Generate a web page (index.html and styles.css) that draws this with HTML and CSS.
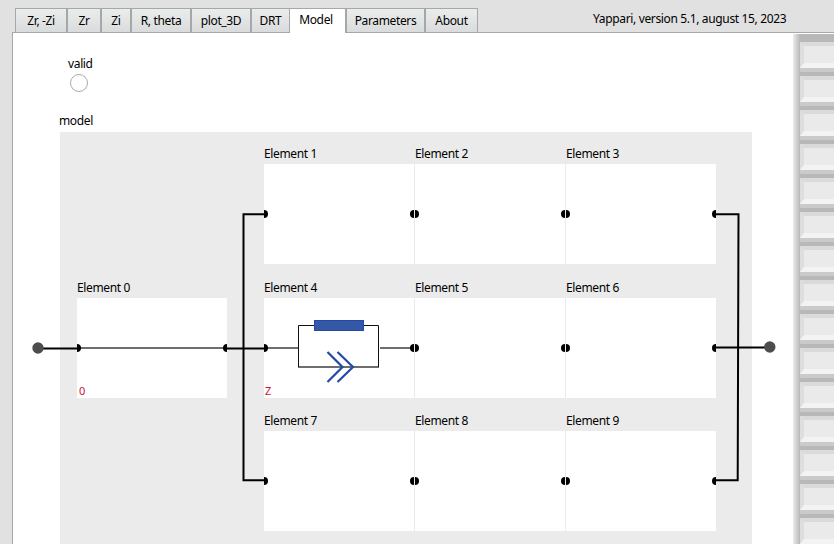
FILE: index.html
```html
<!DOCTYPE html>
<html lang="en">
<head>
<meta charset="utf-8">
<title>Yappari</title>
<link rel="stylesheet" href="styles.css">
</head>
<body>
<header class="bar">
  <nav class="tabs">
    <span class="tab w1">Zr, -Zi</span><span class="tab w2">Zr</span><span class="tab w3">Zi</span><span class="tab w4">R, theta</span><span class="tab w5">plot_3D</span><span class="tab w6">DRT</span><span class="tab active">Model</span><span class="tab w8">Parameters</span><span class="tab w9">About</span>
  </nav>
  <div class="version">Yappari, version 5.1, august 15, 2023</div>
</header>
<main class="page">
  <section class="content">
    <div class="valid"><span class="valid-label">valid</span><i class="led"></i></div>
    <div class="model-label">model</div>
    <div class="model">
      <figure class="el e0"><figcaption class="e0-label">Element 0</figcaption><div class="cell in out"><svg class="art" viewBox="0 0 150 100"><path class="wire" d="M3 50H147"/></svg><b class="code zero">0</b></div></figure>
      <div class="grid">
        <figure class="el"><figcaption class="e1-label">Element 1</figcaption><div class="cell in out"></div></figure>
        <figure class="el"><figcaption>Element 2</figcaption><div class="cell in out"></div></figure>
        <figure class="el"><figcaption>Element 3</figcaption><div class="cell in out"></div></figure>
        <figure class="el"><figcaption>Element 4</figcaption><div class="cell in out"><svg class="art" viewBox="0 0 150 100"><path class="wire" d="M3 50H34.5M116 50H147M34 69H115"/><path d="M34.5 69V27.5H114.5V69" fill="none" stroke="#111"/><rect x="50.5" y="22.5" width="49" height="10" fill="#3457a8" stroke="#2349a5"/><path d="M63.5 54L78.5 69L63.5 84M73.5 54L89 69L73.5 84" fill="none" stroke="#234aa6" stroke-width="2.2"/></svg><b class="code">Z</b></div></figure>
        <figure class="el"><figcaption>Element 5</figcaption><div class="cell in out"></div></figure>
        <figure class="el"><figcaption>Element 6</figcaption><div class="cell in out"></div></figure>
        <figure class="el"><figcaption>Element 7</figcaption><div class="cell in out"></div></figure>
        <figure class="el"><figcaption>Element 8</figcaption><div class="cell in out"></div></figure>
        <figure class="el"><figcaption>Element 9</figcaption><div class="cell in out"></div></figure>
      </div>
      <svg class="wires" viewBox="28 132 752 412">
        <g fill="none" stroke="#000" stroke-width="2">
          <path d="M38 348.4H77M227 348.4H264M264 214.3H243.5V480.3H264"/>
          <path d="M716 214.3H738.5L737.7 480.3H716M716 347.4H770"/>
        </g>
        <g fill="#4d4d4d"><circle cx="38" cy="348" r="5.7"/><circle cx="769.8" cy="347" r="5.7"/></g>
      </svg>
    </div>
  </section>
  <aside class="side">
    <i></i><i></i><i></i><i></i><i></i><i></i><i></i><i></i><i></i><i></i><i></i><i></i><i></i><i></i><i></i>
  </aside>
</main>
</body>
</html>
```
FILE: styles.css
```css
* { box-sizing: border-box; }
body {
  margin: 0; width: 834px; height: 544px; overflow: hidden;
  display: flex; flex-direction: column;
  background: #e1e1e1; color: #000;
  font: 12px/16px "Noto Sans", "Open Sans", sans-serif;
  letter-spacing: -0.35px;
}
.bar { height: 33px; flex: none; display: flex; padding: 8px 0 0 15px; position: relative; z-index: 1; }
.tabs { display: flex; width: 578px; }
.tab {
  height: 25px; line-height: 24px; text-align: center; white-space: nowrap;
  border: 1px solid #a5a8aa; background: linear-gradient(#ebeded, #dadbdc);
}
.w1 { width: 52px; } .w2 { width: 34px; } .w3 { width: 30px; }
.w4, .w5 { width: 60px; } .w6 { width: 39px; } .w8 { width: 79px; } .w9 { width: 53px; }
.active { width: 56px; background: #fff; border-left: 0; border-bottom: 0; line-height: 21px; padding-right: 3px; }
.version { line-height: 22px; white-space: nowrap; }
.page {
  flex: none; height: 512px; margin: -1px 0 0 12px; display: flex;
  background: #fff; border: solid #a5a8aa; border-width: 1px 0 0 1px;
}
.content { width: 780px; flex: none; padding-top: 23px; }
.valid { display: flex; flex-direction: column; margin-left: 55px; height: 57px; }
.led { width: 18px; height: 18px; margin: 2px 0 0 2px; border: 1px solid #aaa; border-radius: 50%; }
.model-label { margin-left: 46px; height: 19px; }
.model { position: relative; margin-left: 47px; width: 692px; height: 420px; background: #ebebeb; display: flex; padding: 13px 0 0 17px; }
.el { margin: 0; }
figcaption { height: 19px; line-height: 17px; white-space: nowrap; }
.e0 { margin-top: 134px; width: 187px; flex: none; }
.grid { display: grid; grid-template-columns: repeat(3, 150px); column-gap: 1px; grid-auto-rows: 119px; row-gap: 14.5px; }
.cell { position: relative; width: 150px; height: 100px; background: #fff; overflow: hidden; }
.cell::before, .cell::after {
  content: ""; position: absolute; top: 46px; width: 8px; height: 8px; background: #000; border-radius: 50%; z-index: 1;
}
.cell::before { left: -4px; }
.cell::after { right: -4px; }
.art { display: block; width: 150px; height: 100px; }
.wire { fill: none; stroke: #6e6e6e; stroke-width: 2; }
.code { position: absolute; left: 1px; bottom: 0; font: 11px/14px "Noto Sans", sans-serif; color: #cf1030; }
.zero { left: 2px; }
.wires { position: absolute; left: -32px; top: 0; width: 752px; height: 412px; }
.side {
  flex: none; width: 60px; height: 520px; margin-top: 1px; padding: 8px 0 0 7px;
  background: linear-gradient(90deg, #ececec, #b8b8b8 7px);
}
.side i {
  display: block; height: 26px; margin-bottom: 8px; background: #eaeaea;
  border: solid; border-width: 4px 0 5px 4px; border-color: #dadada #eee #f3f3f3 #dedede;
  box-shadow: 0 4px 0 #cacaca;
}
```
